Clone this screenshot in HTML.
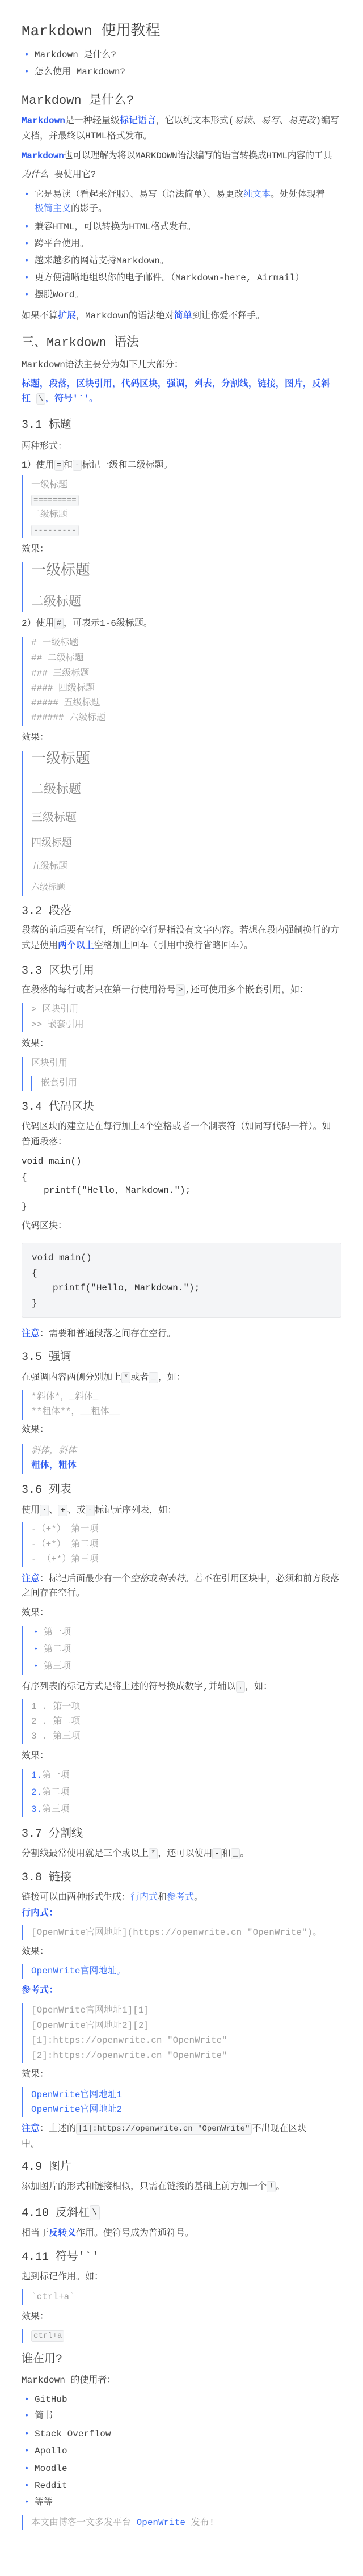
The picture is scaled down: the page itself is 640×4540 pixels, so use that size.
<!DOCTYPE html>
<html><head><meta charset="utf-8">
<style>
html,body{margin:0;padding:0;background:#fff;}
body{width:640px;height:4540px;position:relative;overflow:hidden;font-family:"Liberation Mono","Noto Serif CJK SC",serif;font-size:16px;color:#454545;}
.l{position:absolute;left:38px;white-space:nowrap;line-height:26px;height:26px;}
.q{left:55px;color:#a0a0a0;}
.b{color:#2e5bf0;font-weight:bold;}
.bl{color:#3a6ef5;}
.i{font-style:italic;}
.bar{position:absolute;left:38px;width:2px;background:#4a7cf7;}
.dot{position:absolute;left:43px;color:#3a6ef5;font-size:14px;line-height:26px;}
.c{display:inline-block;line-height:18px;padding:0 3px;background:#f5f6f7;border:1px solid #e3e4e6;border-radius:3px;font-size:14px;vertical-align:middle;}
.h{color:#404040;}
</style></head><body>

<div class="l h" style="top:38px;font-size:26px;line-height:34px;height:34px;">Markdown 使用教程</div>
<div class="dot" style="top:84px">•</div><div class="l" style="left:61px;top:84px">Markdown 是什么?</div>
<div class="dot" style="top:114px">•</div><div class="l" style="left:61px;top:114px">怎么使用 Markdown?</div>

<div class="l h" style="top:163px;font-size:22px;line-height:30px;height:30px;">Markdown 是什么?</div>
<div class="l" style="top:200px"><span class="b">Markdown</span>是一种轻量级<span class="b">标记语言</span>，它以纯文本形式(<span class="i">易读、易写、易更改</span>)编写</div>
<div class="l" style="top:227px">文档，并最终以HTML格式发布。</div>
<div class="l" style="top:262px;letter-spacing:-0.3px"><span class="b">Markdown</span>也可以理解为将以MARKDOWN语法编写的语言转换成HTML内容的工具</div>
<div class="l" style="top:295px"><span class="i">为什么</span> 要使用它?</div>
<div class="dot" style="top:330px">•</div><div class="l" style="left:61px;top:330px">它是易读（看起来舒服）、易写（语法简单）、易更改<span class="bl">纯文本</span>。处处体现着</div>
<div class="l" style="left:61px;top:355px"><span class="bl">极简主义</span>的影子。</div>
<div class="dot" style="top:387px">•</div><div class="l" style="left:61px;top:387px">兼容HTML，可以转换为HTML格式发布。</div>
<div class="dot" style="top:417px">•</div><div class="l" style="left:61px;top:417px">跨平台使用。</div>
<div class="dot" style="top:447px">•</div><div class="l" style="left:61px;top:447px">越来越多的网站支持Markdown。</div>
<div class="dot" style="top:477px">•</div><div class="l" style="left:61px;top:477px">更方便清晰地组织你的电子邮件。（Markdown-here, Airmail）</div>
<div class="dot" style="top:507px">•</div><div class="l" style="left:61px;top:507px">摆脱Word。</div>
<div class="l" style="top:544px">如果不算<span class="b">扩展</span>，Markdown的语法绝对<span class="b">简单</span>到让你爱不释手。</div>

<div class="l h" style="top:590px;font-size:22px;line-height:30px;height:30px;">三、Markdown 语法</div>
<div class="l" style="top:630px">Markdown语法主要分为如下几大部分：</div>
<div class="l b" style="top:664px">标题，段落，区块引用，代码区块，强调，列表，分割线，链接，图片，反斜</div>
<div class="l b" style="top:690px">杠 <span class="c" style="font-weight:normal;color:#555">\</span>，符号'`'。</div>

<div class="l h" style="top:736px;font-size:20px;line-height:28px;height:28px;">3.1 标题</div>
<div class="l" style="top:774px">两种形式：</div>
<div class="l" style="top:807px">1）使用<span class="c">=</span>和<span class="c">-</span>标记一级和二级标题。</div>
<div class="bar" style="top:838px;height:110px"></div>
<div class="l q" style="top:842px">一级标题</div>
<div class="l q" style="top:869px"><span class="c" style="color:#999">=========</span></div>
<div class="l q" style="top:894px">二级标题</div>
<div class="l q" style="top:922px"><span class="c" style="color:#999">---------</span></div>
<div class="l" style="top:955px">效果：</div>
<div class="bar" style="top:991px;height:88px"></div>
<div class="l q" style="top:988px;font-size:26px;line-height:36px;height:36px;color:#777">一级标题</div>
<div class="l q" style="top:1047px;font-size:22px;line-height:30px;height:30px;color:#888">二级标题</div>
<div class="l" style="top:1086px">2）使用<span class="c">#</span>，可表示1-6级标题。</div>
<div class="bar" style="top:1122px;height:158px"></div>
<div class="l q" style="top:1120px"># 一级标题</div>
<div class="l q" style="top:1147px">## 二级标题</div>
<div class="l q" style="top:1174px">### 三级标题</div>
<div class="l q" style="top:1200px">#### 四级标题</div>
<div class="l q" style="top:1226px">##### 五级标题</div>
<div class="l q" style="top:1252px">###### 六级标题</div>
<div class="l" style="top:1287px">效果：</div>
<div class="bar" style="top:1323px;height:256px"></div>
<div class="l q" style="top:1320px;font-size:26px;line-height:36px;height:36px;color:#777">一级标题</div>
<div class="l q" style="top:1378px;font-size:22px;line-height:30px;height:30px;color:#888">二级标题</div>
<div class="l q" style="top:1429px;font-size:20px;line-height:28px;height:28px;color:#8a8a8a">三级标题</div>
<div class="l q" style="top:1474px;font-size:18px;color:#909090">四级标题</div>
<div class="l q" style="top:1514px;font-size:16px">五级标题</div>
<div class="l q" style="top:1552px;font-size:15px">六级标题</div>

<div class="l h" style="top:1593px;font-size:20px;line-height:28px;height:28px;">3.2 段落</div>
<div class="l" style="top:1627px">段落的前后要有空行，所谓的空行是指没有文字内容。若想在段内强制换行的方</div>
<div class="l" style="top:1654px">式是使用<span class="b">两个以上</span>空格加上回车（引用中换行省略回车）。</div>

<div class="l h" style="top:1698px;font-size:20px;line-height:28px;height:28px;">3.3 区块引用</div>
<div class="l" style="top:1732px">在段落的每行或者只在第一行使用符号<span class="c">&gt;</span>,还可使用多个嵌套引用，如：</div>
<div class="bar" style="top:1767px;height:52px"></div>
<div class="l q" style="top:1766px">&gt; 区块引用</div>
<div class="l q" style="top:1793px">&gt;&gt; 嵌套引用</div>
<div class="l" style="top:1827px">效果：</div>
<div class="bar" style="top:1863px;height:60px"></div>
<div class="l q" style="top:1861px">区块引用</div>
<div class="bar" style="left:54px;top:1897px;height:26px"></div>
<div class="l q" style="left:72px;top:1896px">嵌套引用</div>

<div class="l h" style="top:1938px;font-size:20px;line-height:28px;height:28px;">3.4 代码区块</div>
<div class="l" style="top:1973px">代码区块的建立是在每行加上4个空格或者一个制表符（如同写代码一样）。如</div>
<div class="l" style="top:2000px">普通段落：</div>
<div class="l" style="top:2034px;color:#333">void main()</div>
<div class="l" style="top:2062px;color:#333">{</div>
<div class="l" style="left:77px;top:2085px;color:#333">printf("Hello, Markdown.");</div>
<div class="l" style="top:2114px;color:#333">}</div>
<div class="l" style="top:2148px">代码区块：</div>
<div style="position:absolute;left:38px;top:2190px;width:562px;height:130px;background:#f4f5f7;border:1px solid #e6e7e9;border-radius:3px;"></div>
<div class="l" style="left:56px;top:2204px;color:#333">void main()</div>
<div class="l" style="left:56px;top:2231px;color:#333">{</div>
<div class="l" style="left:93px;top:2257px;color:#333">printf("Hello, Markdown.");</div>
<div class="l" style="left:56px;top:2284px;color:#333">}</div>
<div class="l" style="top:2338px"><span class="b">注意</span>：需要和普通段落之间存在空行。</div>

<div class="l h" style="top:2379px;font-size:20px;line-height:28px;height:28px;">3.5 强调</div>
<div class="l" style="top:2415px">在强调内容两侧分别加上<span class="c">*</span>或者<span class="c">_</span>，如：</div>
<div class="bar" style="top:2449px;height:53px"></div>
<div class="l q" style="top:2449px">*斜体*，_斜体_</div>
<div class="l q" style="top:2475px">**粗体**，__粗体__</div>
<div class="l" style="top:2507px">效果：</div>
<div class="bar" style="top:2545px;height:52px"></div>
<div class="l q i" style="top:2544px">斜体，斜体</div>
<div class="l q b" style="top:2570px">粗体，粗体</div>

<div class="l h" style="top:2613px;font-size:20px;line-height:28px;height:28px;">3.6 列表</div>
<div class="l" style="top:2649px">使用<span class="c">·</span>、<span class="c">+</span>、或<span class="c">-</span>标记无序列表，如：</div>
<div class="bar" style="top:2683px;height:79px"></div>
<div class="l q" style="top:2682px">-（+*） 第一项</div>
<div class="l q" style="top:2709px">-（+*） 第二项</div>
<div class="l q" style="top:2735px">- （+*）第三项</div>
<div class="l" style="top:2770px"><span class="b">注意</span>：标记后面最少有一个<span class="i">空格</span>或<span class="i">制表符</span>。若不在引用区块中，必须和前方段落</div>
<div class="l" style="top:2795px">之间存在空行。</div>
<div class="l" style="top:2830px">效果：</div>
<div class="bar" style="top:2866px;height:86px"></div>
<div class="dot" style="left:59px;top:2864px">•</div><div class="l q" style="left:77px;top:2864px">第一项</div>
<div class="dot" style="left:59px;top:2894px">•</div><div class="l q" style="left:77px;top:2894px">第二项</div>
<div class="dot" style="left:59px;top:2924px">•</div><div class="l q" style="left:77px;top:2924px">第三项</div>
<div class="l" style="top:2960px">有序列表的标记方式是将上述的符号换成数字,并辅以<span class="c">.</span>，如：</div>
<div class="bar" style="top:2995px;height:79px"></div>
<div class="l q" style="top:2995px">1 . 第一项</div>
<div class="l q" style="top:3021px">2 . 第二项</div>
<div class="l q" style="top:3047px">3 . 第三项</div>
<div class="l" style="top:3082px">效果：</div>
<div class="bar" style="top:3117px;height:86px"></div>
<div class="l q" style="top:3116px"><span class="bl">1.</span>第一项</div>
<div class="l q" style="top:3146px"><span class="bl">2.</span>第二项</div>
<div class="l q" style="top:3176px"><span class="bl">3.</span>第三项</div>

<div class="l h" style="top:3219px;font-size:20px;line-height:28px;height:28px;">3.7 分割线</div>
<div class="l" style="top:3254px">分割线最常使用就是三个或以上<span class="c">*</span>，还可以使用<span class="c">-</span>和<span class="c">_</span>。</div>
<div class="l h" style="top:3296px;font-size:20px;line-height:28px;height:28px;">3.8 链接</div>
<div class="l" style="top:3331px">链接可以由两种形式生成：<span class="bl">行内式</span>和<span class="bl">参考式</span>。</div>
<div class="l b" style="top:3359px">行内式：</div>
<div class="bar" style="top:3393px;height:26px"></div>
<div class="l q" style="top:3393px">[OpenWrite官网地址](https://openwrite.cn "OpenWrite")。</div>
<div class="l" style="top:3427px">效果：</div>
<div class="bar" style="top:3462px;height:26px"></div>
<div class="l q bl" style="top:3461px">OpenWrite官网地址。</div>
<div class="l b" style="top:3495px">参考式：</div>
<div class="bar" style="top:3531px;height:105px"></div>
<div class="l q" style="top:3530px">[OpenWrite官网地址1][1]</div>
<div class="l q" style="top:3557px">[OpenWrite官网地址2][2]</div>
<div class="l q" style="top:3583px">[1]:https://openwrite.cn "OpenWrite"</div>
<div class="l q" style="top:3610px">[2]:https://openwrite.cn "OpenWrite"</div>
<div class="l" style="top:3643px">效果：</div>
<div class="bar" style="top:3678px;height:53px"></div>
<div class="l q bl" style="top:3679px">OpenWrite官网地址1</div>
<div class="l q bl" style="top:3705px">OpenWrite官网地址2</div>
<div class="l" style="top:3739px"><span class="b">注意</span>：上述的<span class="c">[1]:https://openwrite.cn "OpenWrite"</span>不出现在区块</div>
<div class="l" style="top:3766px">中。</div>

<div class="l h" style="top:3806px;font-size:20px;line-height:28px;height:28px;">4.9 图片</div>
<div class="l" style="top:3841px">添加图片的形式和链接相似，只需在链接的基础上前方加一个<span class="c">!</span>。</div>
<div class="l h" style="top:3887px;font-size:20px;line-height:28px;height:28px;">4.10 反斜杠<span class="c" style="font-size:16px;line-height:24px">\</span></div>
<div class="l" style="top:3923px">相当于<span class="b">反转义</span>作用。使符号成为普通符号。</div>
<div class="l h" style="top:3965px;font-size:20px;line-height:28px;height:28px;">4.11 符号'`'</div>
<div class="l" style="top:4000px">起到标记作用。如：</div>
<div class="bar" style="top:4035px;height:27px"></div>
<div class="l q" style="top:4035px">`ctrl+a`</div>
<div class="l" style="top:4070px">效果：</div>
<div class="bar" style="top:4104px;height:26px"></div>
<div class="l q" style="top:4104px"><span class="c" style="color:#999">ctrl+a</span></div>
<div class="l h" style="top:4145px;font-size:20px;line-height:28px;height:28px;">谁在用?</div>
<div class="l" style="top:4182px">Markdown 的使用者：</div>
<div class="dot" style="top:4216px">•</div><div class="l" style="left:61px;top:4216px">GitHub</div>
<div class="dot" style="top:4245px">•</div><div class="l" style="left:61px;top:4245px">简书</div>
<div class="dot" style="top:4277px">•</div><div class="l" style="left:61px;top:4277px">Stack Overflow</div>
<div class="dot" style="top:4307px">•</div><div class="l" style="left:61px;top:4307px">Apollo</div>
<div class="dot" style="top:4338px">•</div><div class="l" style="left:61px;top:4338px">Moodle</div>
<div class="dot" style="top:4368px">•</div><div class="l" style="left:61px;top:4368px">Reddit</div>
<div class="dot" style="top:4397px">•</div><div class="l" style="left:61px;top:4397px">等等</div>
<div class="bar" style="top:4433px;height:26px"></div>
<div class="l q" style="top:4433px">本文由博客一文多发平台 <span class="bl">OpenWrite</span> 发布!</div>

</body></html>
